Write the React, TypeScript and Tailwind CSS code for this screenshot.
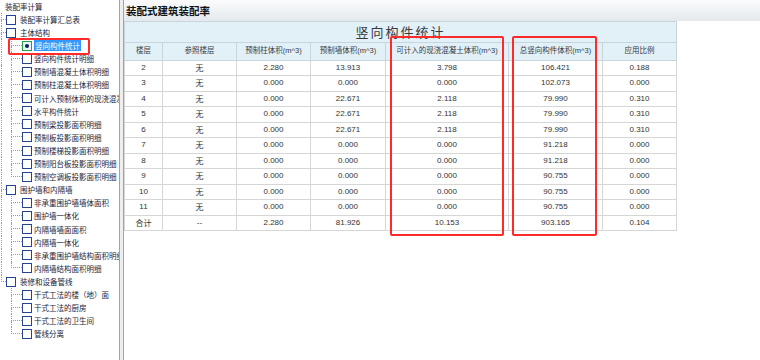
import React from "react";

type TreeItem = {
  label: string;
  level: 1 | 2;
  last?: boolean; // last child of its parent
  parentLast?: boolean; // parent is the last top-level node
  selected?: boolean;
};

const tree: TreeItem[] = [
  { label: "装配率计算汇总表", level: 1 },
  { label: "主体结构", level: 1 },
  { label: "竖向构件统计", level: 2, selected: true },
  { label: "竖向构件统计明细", level: 2 },
  { label: "预制墙混凝土体积明细", level: 2 },
  { label: "预制柱混凝土体积明细", level: 2 },
  { label: "可计入预制体积的现浇混凝土体积明细", level: 2 },
  { label: "水平构件统计", level: 2 },
  { label: "预制梁投影面积明细", level: 2 },
  { label: "预制板投影面积明细", level: 2 },
  { label: "预制楼梯投影面积明细", level: 2 },
  { label: "预制阳台板投影面积明细", level: 2 },
  { label: "预制空调板投影面积明细", level: 2, last: true },
  { label: "围护墙和内隔墙", level: 1 },
  { label: "非承重围护墙墙体面积", level: 2 },
  { label: "围护墙一体化", level: 2 },
  { label: "内隔墙墙面面积", level: 2 },
  { label: "内隔墙一体化", level: 2 },
  { label: "非承重围护墙结构面积明细", level: 2 },
  { label: "内隔墙结构面积明细", level: 2, last: true },
  { label: "装修和设备管线", level: 1, last: true },
  { label: "干式工法的楼（地）面", level: 2, parentLast: true },
  { label: "干式工法的厨房", level: 2, parentLast: true },
  { label: "干式工法的卫生间", level: 2, parentLast: true },
  { label: "管线分离", level: 2, parentLast: true, last: true },
];

const columns = [
  { title: "楼层", width: "w-[38px]" },
  { title: "参照楼层", width: "w-[74px]" },
  { title: "预制柱体积(m^3)", width: "w-[74px]" },
  { title: "预制墙体积(m^3)", width: "w-[75px]" },
  { title: "可计入的现浇混凝土体积(m^3)", width: "w-[123px]" },
  { title: "总竖向构件体积(m^3)", width: "w-[94px]" },
  { title: "应用比例", width: "w-[74px]" },
];

const rows = [
  ["2", "无", "2.280", "13.913", "3.798", "106.421", "0.188"],
  ["3", "无", "0.000", "0.000", "0.000", "102.073", "0.000"],
  ["4", "无", "0.000", "22.671", "2.118", "79.990", "0.310"],
  ["5", "无", "0.000", "22.671", "2.118", "79.990", "0.310"],
  ["6", "无", "0.000", "22.671", "2.118", "79.990", "0.310"],
  ["7", "无", "0.000", "0.000", "0.000", "91.218", "0.000"],
  ["8", "无", "0.000", "0.000", "0.000", "91.218", "0.000"],
  ["9", "无", "0.000", "0.000", "0.000", "90.755", "0.000"],
  ["10", "无", "0.000", "0.000", "0.000", "90.755", "0.000"],
  ["11", "无", "0.000", "0.000", "0.000", "90.755", "0.000"],
  ["合计", "--", "2.280", "81.926", "10.153", "903.165", "0.104"],
];

const cjk = "font-['Noto_Sans_CJK_SC',sans-serif]";
const num = "font-['Liberation_Sans','Noto_Sans_CJK_SC',sans-serif]";

// dotted connector: vertical line on the left, branch to the right at mid height
function Elbow({ width, cont }: { width: string; cont: boolean }) {
  return (
    <div className={`flex flex-none flex-col ${width}`}>
      <div className="h-1/2 border-b border-l border-dotted border-[#9c9c9c]" />
      <div className={`h-1/2 ${cont ? "border-l border-dotted border-[#9c9c9c]" : ""}`} />
    </div>
  );
}

function Checkbox({ checked }: { checked?: boolean }) {
  if (checked) {
    return (
      <span className="flex h-[10px] w-[10px] flex-none items-center justify-center self-center border-[1.5px] border-[#2e9d43] bg-[#e8f4ff]">
        <span className="h-[4px] w-[4px] rounded-full bg-[#0b1d55]" />
      </span>
    );
  }
  return <span className="h-[10px] w-[10px] flex-none self-center border-[1.5px] border-[#27448f] bg-white" />;
}

function TreeRow({ item }: { item: TreeItem }) {
  const label = item.selected ? (
    <span className="self-center bg-[#3399ff] px-[1px] leading-[11px] text-white">{item.label}</span>
  ) : (
    <span className="self-center">{item.label}</span>
  );

  if (item.level === 1) {
    return (
      <div className="flex h-[13.1px] items-stretch overflow-hidden pl-[1px]">
        <Elbow width="w-[5px]" cont={!item.last} />
        <Checkbox />
        <span className="ml-[4px] flex min-w-0 overflow-hidden">{label}</span>
      </div>
    );
  }
  return (
    <div className="flex h-[13.1px] items-stretch overflow-hidden pl-[1px]">
      <div
        className={`w-[10px] flex-none ${item.parentLast ? "" : "border-l border-dotted border-[#9c9c9c]"}`}
      />
      <Elbow width="w-[11px]" cont={!item.last} />
      <Checkbox checked={item.selected} />
      <span className="ml-[2px] flex min-w-0 overflow-hidden">{label}</span>
    </div>
  );
}

function Sidebar() {
  return (
    <div className={`relative w-[119px] flex-none overflow-hidden whitespace-nowrap bg-white text-[7.5px] text-[#1c1c36] ${cjk}`}>
      <div className="flex h-[13.1px] items-center pl-[5px]">装配率计算</div>
      {tree.map((item) => (
        <TreeRow key={item.label} item={item} />
      ))}
      {/* annotation frame around the current node */}
      <div className="absolute left-[8px] top-[38px] h-[17px] w-[82px] rounded-[2px] border-2 border-[#ff2b2b]" />
    </div>
  );
}

function StatsTable() {
  return (
    <table className="w-[553px] table-fixed border-collapse border border-[#8c8c8c] text-[#333]">
      <colgroup>
        {columns.map((c) => (
          <col key={c.title} className={c.width} />
        ))}
      </colgroup>
      <thead>
        <tr className="h-[18px] bg-[#e2f0f8]">
          <th colSpan={7} className={`border border-[#c9d5dc] p-0 text-[13px] font-normal tracking-[2px] text-[#3a3a3a] ${cjk}`}>
            竖向构件统计
          </th>
        </tr>
        <tr className="h-[18px] bg-[#e2f0f8]">
          {columns.map((c) => (
            <th
              key={c.title}
              className={`whitespace-nowrap border border-[#c9d5dc] p-0 text-[7.5px] font-normal text-[#3a3a3a] ${num}`}
            >
              {c.title}
            </th>
          ))}
        </tr>
      </thead>
      <tbody>
        {rows.map((r) => (
          <tr key={r[0]} className="h-[15.5px]">
            {r.map((v, i) => (
              <td
                key={i}
                className={`border border-[#d6d6d6] p-0 text-center ${
                  /[\u4e00-\u9fff]/.test(v) ? `text-[8px] ${cjk}` : `text-[8px] ${num}`
                } ${v === "合计" ? "text-[7px]" : ""}`}
              >
                {v}
              </td>
            ))}
          </tr>
        ))}
      </tbody>
    </table>
  );
}

export default function App() {
  return (
    <div className="flex h-[360px] w-[760px] overflow-hidden bg-white">
      <Sidebar />

      {/* splitter */}
      <div className="w-[5px] flex-none border-x border-[#a4a4a4] bg-[#eeeeee]" />

      <div className="relative flex min-w-0 flex-1 flex-col bg-white">
        <div className={`flex h-[21px] flex-none items-center bg-gradient-to-b from-[#fbfbfb] to-[#e4e9ed] pl-[2px] text-[10.5px] font-bold text-[#111] ${cjk}`}>
          装配式建筑装配率
        </div>
        <div className="flex-1">
          <StatsTable />
        </div>

        {/* annotation frames over two columns */}
        <div className="absolute left-[266px] top-[36px] h-[200px] w-[114px] rounded-[2px] border-2 border-[#ff2b2b]" />
        <div className="absolute left-[388px] top-[36px] h-[200px] w-[85px] rounded-[2px] border-2 border-[#ff2b2b]" />
      </div>
    </div>
  );
}
